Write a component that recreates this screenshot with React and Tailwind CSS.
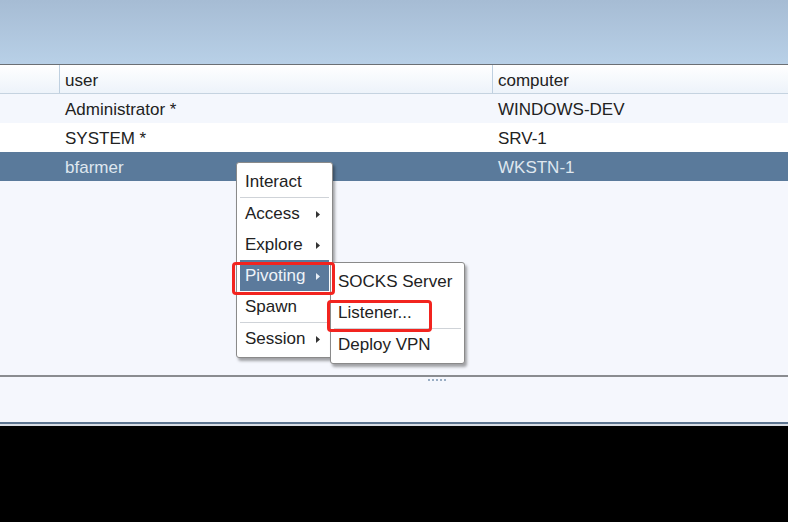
import { Fragment } from 'react'

const rows = [
  { user: 'Administrator *', computer: 'WINDOWS-DEV', bg: 'bg-[#f4f7fd]' },
  { user: 'SYSTEM *', computer: 'SRV-1', bg: 'bg-white' },
  { user: 'bfarmer', computer: 'WKSTN-1', selected: true },
]

const mainMenu = [
  { label: 'Interact', sep: true },
  { label: 'Access', sub: true },
  { label: 'Explore', sub: true },
  { label: 'Pivoting', sub: true, active: true },
  { label: 'Spawn', sep: true },
  { label: 'Session', sub: true },
]

const pivotMenu = [
  { label: 'SOCKS Server' },
  { label: 'Listener...', sep: true },
  { label: 'Deploy VPN' },
]

function Arrow({ light }) {
  return (
    <svg width="4" height="7" viewBox="0 0 4 7" className="ml-auto">
      <path d="M0 0 L4 3.5 L0 7 Z" fill={light ? '#e8eef5' : '#333'} />
    </svg>
  )
}

function Menu({ items, className, pad }) {
  return (
    <div className={`absolute bg-white border border-[#8a8a8a] rounded-[3px] shadow-[2px_3px_3px_rgba(0,0,0,0.35)] py-[3px] ${className}`}>
      {items.map((item) => (
        <Fragment key={item.label}>
          <div
            className={`h-[31px] flex items-center whitespace-nowrap pr-[9px] mx-[3px] pt-[1px] text-[17px] ${pad} ${
              item.active ? 'bg-[#5b7a9c] text-[#eef3f8]' : 'text-[#222]'
            }`}
          >
            <span>{item.label}</span>
            {item.sub && <Arrow light={item.active} />}
          </div>
          {item.sep && <div className="h-px bg-[#cfd3d8] mx-[3px]" />}
        </Fragment>
      ))}
    </div>
  )
}

export default function App() {
  return (
    <div className="w-[788px] h-[522px] relative flex flex-col overflow-hidden bg-black font-['Liberation_Sans',Arial,sans-serif]">
      {/* title area */}
      <div className="h-[65px] shrink-0 bg-gradient-to-b from-[#a6bcd4] to-[#b8d0e7] border-b border-[#6b6f74]" />

      {/* table header */}
      <div className="h-[29px] shrink-0 flex bg-gradient-to-b from-white to-[#edf3fa] border-b border-[#c5d3e0] text-[17px] text-[#222]">
        <div className="w-[60px] border-r border-[#bfd0e0]" />
        <div className="w-[433px] border-r border-[#bfd0e0] flex items-center pl-[5px] pt-[3px]">user</div>
        <div className="flex-1 flex items-center pl-[5px] pt-[3px]">computer</div>
      </div>

      {/* rows */}
      {rows.map((r) => (
        <div
          key={r.user}
          className={`h-[29px] shrink-0 flex text-[17px] ${
            r.selected ? 'bg-[#5a7a9b] text-[#dfe7ef]' : `${r.bg} text-[#222]`
          }`}
        >
          <div className="w-[60px]" />
          <div className="w-[433px] flex items-center pl-[5px] pt-[3px]">{r.user}</div>
          <div className="flex-1 flex items-center pl-[5px] pt-[3px]">{r.computer}</div>
        </div>
      ))}

      <div className="h-[196px] shrink-0 bg-[#f5f7fd] border-b-2 border-[#8a8c90]" />

      {/* bottom panel */}
      <div className="h-[45px] shrink-0 bg-[#f5f7fd] flex justify-center">
        <div className="ml-[86px] mt-[2px] flex gap-[2px] h-[4px]">
          {[0, 1, 2, 3, 4].map((i) => (
            <span key={i} className="w-[2px] h-[2px] bg-[#9aaec4]" />
          ))}
        </div>
      </div>
      <div className="h-[2px] shrink-0 bg-[#5d7590]" />
      <div className="h-[2px] shrink-0 bg-[#d8dde4]" />
      <div className="flex-1 bg-black" />

      {/* context menus */}
      <Menu items={mainMenu} pad="pl-[5px]" className="left-[236px] top-[162px] w-[97px]" />
      <Menu items={pivotMenu} pad="pl-[4px]" className="left-[330px] top-[262px] w-[135px]" />

      {/* red highlight boxes */}
      <div className="absolute left-[232px] top-[262px] w-[103px] h-[33px] border-[3px] border-[#f2241f] rounded-[4px]" />
      <div className="absolute left-[327px] top-[300px] w-[105px] h-[32px] border-[3px] border-[#f2241f] rounded-[4px]" />
    </div>
  )
}
